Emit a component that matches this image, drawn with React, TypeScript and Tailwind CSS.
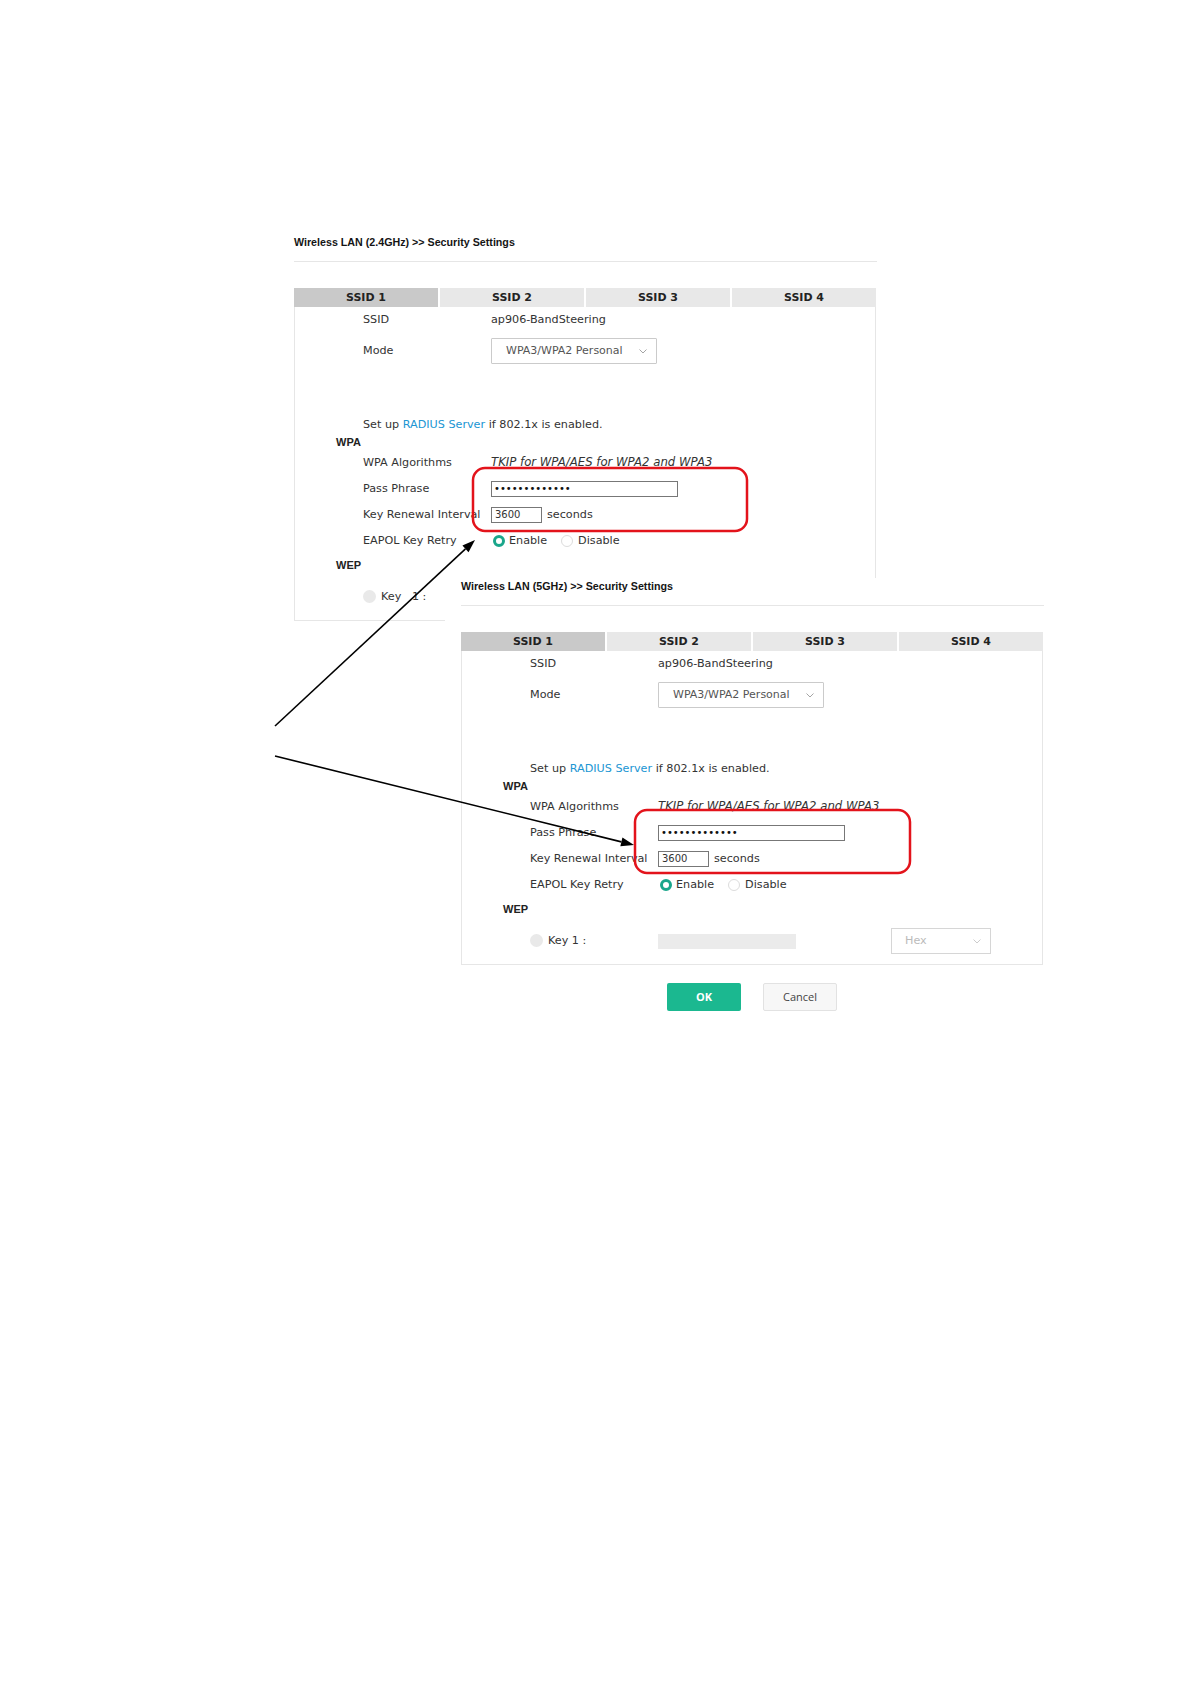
import React from "react";

function Chevron({ color = "#9a9a9a" }: { color?: string }) {
  return (
    <svg width="8" height="5" viewBox="0 0 8 5" className="shrink-0">
      <polyline points="0.5,0.5 4,4 7.5,0.5" fill="none" stroke={color} strokeWidth="0.9" />
    </svg>
  );
}

function Row({ h, label, children }: { h: string; label?: string; children?: React.ReactNode }) {
  return (
    <div className={`flex items-center ${h}`}>
      <div className="w-[196px] shrink-0 pl-[68px] whitespace-nowrap">{label}</div>
      <div className="flex items-center whitespace-nowrap">{children}</div>
    </div>
  );
}

function Panel({ title, wideKey }: { title: string; wideKey?: boolean }) {
  return (
    <div className="w-[583px]">
      <div className="h-4 leading-4 text-[10.7px] font-bold font-['Liberation_Sans',Arial,sans-serif] text-[#151515] whitespace-nowrap">
        {title}
      </div>
      <div className="mt-[11px] h-px bg-[#e6e6e6]" />
      <div className="mt-[26px] w-[582px] h-[17px] grid grid-cols-4 gap-[2px] font-['DejaVu_Sans',sans-serif] font-bold text-[11px] text-[#222]">
        <div className="bg-[#c9c9c9] flex items-center justify-center pt-[2px]">SSID 1</div>
        <div className="bg-[#e8e8e8] flex items-center justify-center pt-[2px]">SSID 2</div>
        <div className="bg-[#e8e8e8] flex items-center justify-center pt-[2px]">SSID 3</div>
        <div className="bg-[#e8e8e8] flex items-center justify-center pt-[2px]">SSID 4</div>
      </div>
      <div className="w-[582px] h-[316px] pt-[1px] border-x border-b border-[#e6e6e6] font-['DejaVu_Sans',sans-serif] text-[11.2px] text-[#333]">
        <Row h="h-[28px]" label="SSID">ap906-BandSteering</Row>
        <Row h="h-[34px]" label="Mode">
          <div className="w-[166px] h-[26px] border border-[#cbcbcb] rounded-[1px] flex items-center justify-between pl-[14px] pr-[9px] text-[#555] text-[11px]">
            <span>WPA3/WPA2 Personal</span>
            <Chevron />
          </div>
        </Row>
        <div className="h-[49px]" />
        <div className="h-[17px] flex items-center pl-[68px] whitespace-nowrap">
          Set up&nbsp;<span className="text-[#2196d3]">RADIUS Server</span>&nbsp;if 802.1x is enabled.
        </div>
        <div className="h-[16px] flex items-center pl-[41px] font-['Liberation_Sans',Arial,sans-serif] font-bold text-[11px] text-[#222]">
          WPA
        </div>
        <Row h="h-[26px]" label="WPA Algorithms">
          <span className="italic text-[11.7px]">TKIP for WPA/AES for WPA2 and WPA3</span>
        </Row>
        <Row h="h-[26px]" label="Pass Phrase">
          <div className="w-[187px] h-[16px] border border-[#777] flex items-center pl-[2px] text-[10px] leading-none text-[#111]">
            •••••••••••••
          </div>
        </Row>
        <Row h="h-[26px]" label="Key Renewal Interval">
          <div className="w-[51px] h-[16px] border border-[#777] flex items-center pl-[3px] text-[10px] leading-none text-[#333]">
            3600
          </div>
          <span className="ml-[5px]">seconds</span>
        </Row>
        <Row h="h-[27px]" label="EAPOL Key Retry">
          <span className="ml-[2px] w-[12px] h-[12px] rounded-full border-[3.5px] border-[#1aa68b] bg-white" />
          <span className="ml-[4px]">Enable</span>
          <span className="ml-[14px] w-[12px] h-[12px] rounded-full border border-[#dcdcdc] bg-white" />
          <span className="ml-[5px]">Disable</span>
        </Row>
        <div className="h-[20px] flex items-center pl-[41px] font-['Liberation_Sans',Arial,sans-serif] font-bold text-[11px] text-[#222]">
          WEP
        </div>
        <div className="h-[44px] flex items-center">
          <div className="w-[196px] shrink-0 pl-[68px] flex items-center whitespace-nowrap">
            <span className="w-[13px] h-[13px] rounded-full bg-[#e9e9e9]" />
            <span className="ml-[5px]">{wideKey ? "Key\u00a0\u00a0\u00a01 :" : "Key 1 :"}</span>
          </div>
          <div className="w-[138px] h-[15px] bg-[#ebebeb]" />
          <div className="ml-[95px] w-[100px] h-[26px] border border-[#d6d6d6] flex items-center justify-between pl-[13px] pr-[9px] text-[#bbbbbb]">
            <span>Hex</span>
            <Chevron color="#c6c6c6" />
          </div>
        </div>
      </div>
    </div>
  );
}

export default function App() {
  const a1 = { x1: 275, y1: 726, x2: 475, y2: 540 };
  const a2 = { x1: 275, y1: 756, x2: 634, y2: 845 };
  const head = (a: { x1: number; y1: number; x2: number; y2: number }) => {
    const dx = a.x2 - a.x1;
    const dy = a.y2 - a.y1;
    const len = Math.hypot(dx, dy);
    const ux = dx / len;
    const uy = dy / len;
    const bx = a.x2 - 13 * ux;
    const by = a.y2 - 13 * uy;
    const nx = -uy;
    const ny = ux;
    return {
      bx,
      by,
      pts: `${a.x2},${a.y2} ${bx + 4.5 * nx},${by + 4.5 * ny} ${bx - 4.5 * nx},${by - 4.5 * ny}`,
    };
  };
  const h1 = head(a1);
  const h2 = head(a2);
  return (
    <div className="relative w-[1190px] h-[1684px] bg-white overflow-hidden">
      <div className="pl-[294px] pt-[234px]">
        <Panel title="Wireless LAN (2.4GHz) >> Security Settings" wideKey />
      </div>

      <div className="absolute left-[445px] top-[578px] w-[620px] h-[450px] bg-white pl-[16px]">
        <Panel title="Wireless LAN (5GHz) >> Security Settings" />
        <div className="w-[582px] mt-[18px] flex justify-center gap-[22px]">
          <button className="w-[74px] h-[28px] rounded-[2px] bg-[#1bb890] text-white font-bold text-[11px] font-['Open_Sans',sans-serif]">
            OK
          </button>
          <button className="w-[74px] h-[28px] rounded-[2px] bg-[#f7f7f7] border border-[#e2e2e2] text-[#444] text-[11px] font-['Open_Sans',sans-serif]">
            Cancel
          </button>
        </div>
      </div>

      <svg className="absolute inset-0 pointer-events-none" width="1190" height="1684">
        <rect x="473" y="468" width="274" height="63" rx="12" fill="none" stroke="#e3131b" strokeWidth="2.5" />
        <rect x="635" y="810" width="275" height="63" rx="12" fill="none" stroke="#e3131b" strokeWidth="2.5" />
        <line x1={a1.x1} y1={a1.y1} x2={h1.bx} y2={h1.by} stroke="#000" strokeWidth="1.6" />
        <polygon points={h1.pts} fill="#000" />
        <line x1={a2.x1} y1={a2.y1} x2={h2.bx} y2={h2.by} stroke="#000" strokeWidth="1.6" />
        <polygon points={h2.pts} fill="#000" />
      </svg>
    </div>
  );
}
